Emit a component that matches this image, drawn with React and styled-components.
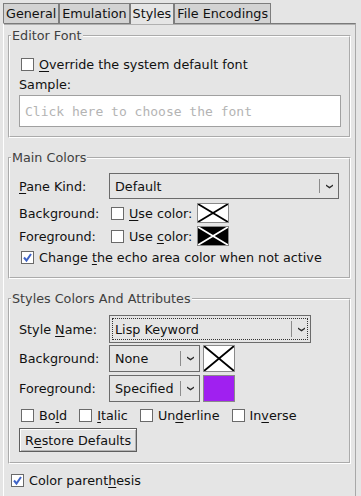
import React from 'react';
import styled, { createGlobalStyle } from 'styled-components';

const GlobalStyle = createGlobalStyle`
  html, body {
    margin: 0;
    background: #e5e5e5;
  }
  body {
    font-family: "DejaVu Sans", "Liberation Sans", sans-serif;
    font-size: 12.75px;
    color: #111;
  }
  u {
    text-underline-offset: 2px;
  }
`;

const Window = styled.div`
  width: 361px;
  height: 496px;
  box-sizing: border-box;
  padding: 3px 5px 0 3px;
  display: flex;
  flex-direction: column;
  overflow: hidden;
`;

const TabBar = styled.div`
  display: flex;
  height: 20px;
  position: relative;
  z-index: 1;
`;

const Tab = styled.div`
  box-sizing: border-box;
  height: ${p => (p.$active ? 21 : 20)}px;
  padding: 0 2px;
  line-height: 19px;
  border: 1px solid #7d7d7d;
  border-bottom: none;
  background: ${p => (p.$active ? '#e5e5e5' : '#d3d3d3')};
  white-space: nowrap;
`;

const Panel = styled.div`
  flex: 1;
  border-top: 1px solid #7a7a7a;
  border-left: 1px solid #fff;
  border-right: 1px solid #a8a8a8;
  box-shadow: inset 0 1px 0 #b0b0b0;
  padding: 4px 4px 0 4px;
`;

const Group = styled.fieldset`
  margin: 0 0 ${p => p.$mb ?? 12}px;
  padding: 0;
  border: 2px groove #fff;
  min-width: 0;
`;

const GroupTitle = styled.legend`
  margin-left: 1px;
  padding: 0 1px;
  line-height: 15px;
  color: #404040;
`;

const GroupBody = styled.div`
  display: flex;
  flex-direction: column;
  padding: ${p => p.$top}px 8px ${p => p.$bottom}px 9px;
`;

const CheckRow = styled.label`
  display: flex;
  align-items: center;
  height: 17px;
  gap: 5px;
  margin: ${p => p.$mt || 0}px 0 0 ${p => p.$ml || 0}px;
  white-space: nowrap;
`;

const Box = styled.span`
  flex: none;
  box-sizing: border-box;
  width: 13px;
  height: 13px;
  border: 1px solid #6a6a6a;
  background: #fff;
  display: flex;
  align-items: center;
  justify-content: center;
`;

const Caption = styled.span`
  line-height: 15px;
  white-space: nowrap;
`;

const FieldLabel = styled.div`
  line-height: 15px;
  margin-top: ${p => p.$mt || 0}px;
`;

const FontSample = styled.div`
  margin-top: 3px;
  height: 32px;
  box-sizing: border-box;
  border: 1px solid #a0a0a0;
  background: #fff;
  padding: 0 5px;
  display: flex;
  align-items: center;
  font-family: "DejaVu Sans Mono", "Liberation Mono", monospace;
  font-size: 13px;
  color: #b4b4b4;
`;

const FormRow = styled.div`
  display: grid;
  grid-template-columns: 90px auto;
  align-items: center;
  height: ${p => p.$h}px;
  margin-top: ${p => p.$mt || 0}px;
`;

const RowControls = styled.div`
  display: flex;
  align-items: center;
  gap: ${p => p.$gap ?? 3}px;
`;

const Combo = styled.div`
  box-sizing: border-box;
  width: ${p => p.$w}px;
  height: ${p => p.$h}px;
  border: 1px solid #6b6b6b;
  background: #e5e5e5;
  display: flex;
  outline: ${p => (p.$focus ? '1px dotted #333' : 'none')};
  outline-offset: -4px;
`;

const ComboText = styled.div`
  flex: 1;
  display: flex;
  align-items: center;
  padding-left: 5px;
  white-space: nowrap;
`;

const ComboArrow = styled.div`
  width: 18px;
  display: flex;
  align-items: center;
  justify-content: center;
  border-left: 1px solid #8c8c8c;
  margin: 5px 0;
`;

const Swatch = styled.div`
  box-sizing: border-box;
  width: 32px;
  height: ${p => p.$h}px;
  border: 1px solid #8a8a8a;
  background: ${p => p.$bg};
  display: flex;
`;

const SwatchGap = styled.span`
  width: 5px;
`;

const AttrRow = styled.div`
  display: flex;
  align-items: center;
  gap: 12px;
  margin: 5px 0 0 2px;
`;

const Button = styled.div`
  align-self: flex-start;
  box-sizing: border-box;
  height: 24px;
  margin-top: 4px;
  padding: 0 5px;
  display: flex;
  align-items: center;
  border: 1px solid #5e5e5e;
  box-shadow: inset 1px 1px 0 #fff, inset -1px -1px 0 #b4b4b4;
  background: #e5e5e5;
  white-space: nowrap;
`;

const Check = ({ checked, children, mt, ml }) => (
  <CheckRow $mt={mt} $ml={ml}>
    <Box>
      {checked && (
        <svg width="11" height="11" viewBox="0 0 11 11">
          <path d="M2 5.5 L4.5 8.5 L9 2" fill="none" stroke="#3f63c6" strokeWidth="2" />
        </svg>
      )}
    </Box>
    <Caption>{children}</Caption>
  </CheckRow>
);

const Arrow = () => (
  <svg width="7" height="5" viewBox="0 0 7 5">
    <path d="M0 0.5 L3.5 2.8 L7 0.5 L7 2 L3.5 4.6 L0 2 Z" fill="#2a2a2a" />
  </svg>
);

const ComboBox = ({ value, w, h, focus }) => (
  <Combo $w={w} $h={h} $focus={focus}>
    <ComboText>{value}</ComboText>
    <ComboArrow>
      <Arrow />
    </ComboArrow>
  </Combo>
);

const ColorSwatch = ({ bg, line, h }) => (
  <Swatch $bg={bg} $h={h}>
    {line && (
      <svg width="30" height={h - 2} viewBox={`0 0 30 ${h - 2}`} preserveAspectRatio="none">
        <path d={`M0 0 L30 ${h - 2} M30 0 L0 ${h - 2}`} stroke={line} strokeWidth="1.8" />
      </svg>
    )}
  </Swatch>
);

const tabs = ['General', 'Emulation', 'Styles', 'File Encodings'];

export default function App() {
  return (
    <Window>
      <GlobalStyle />
      <TabBar>
        {tabs.map(t => (
          <Tab key={t} $active={t === 'Styles'}>{t}</Tab>
        ))}
      </TabBar>
      <Panel>
        <Group>
          <GroupTitle>Editor Font</GroupTitle>
          <GroupBody $top={13} $bottom={9}>
            <Check ml={2}><u>O</u>verride the system default font</Check>
            <FieldLabel $mt={4}>Sample:</FieldLabel>
            <FontSample>Click here to choose the font</FontSample>
          </GroupBody>
        </Group>

        <Group>
          <GroupTitle>Main Colors</GroupTitle>
          <GroupBody $top={8} $bottom={11}>
            <FormRow $h={26}>
              <span><u>P</u>ane Kind:</span>
              <ComboBox value="Default" w={230} h={26} />
            </FormRow>
            <FormRow $h={20} $mt={4}>
              <span>Background:</span>
              <RowControls $gap={0}>
                <Check ml={2}><u>U</u>se color:</Check>
                <SwatchGap />
                <ColorSwatch bg="#fff" line="#000" h={20} />
              </RowControls>
            </FormRow>
            <FormRow $h={20} $mt={3}>
              <span>Foreground:</span>
              <RowControls $gap={0}>
                <Check ml={2}>Use <u>c</u>olor:</Check>
                <SwatchGap />
                <ColorSwatch bg="#000" line="#fff" h={20} />
              </RowControls>
            </FormRow>
            <Check checked mt={3} ml={2}>Change <u>t</u>he echo area color when not active</Check>
          </GroupBody>
        </Group>

        <Group $mb={8}>
          <GroupTitle>Styles Colors And Attributes</GroupTitle>
          <GroupBody $top={9} $bottom={10}>
            <FormRow $h={27}>
              <span>Style <u>N</u>ame:</span>
              <ComboBox value="Lisp Keyword" w={202} h={28} focus />
            </FormRow>
            <FormRow $h={27} $mt={3}>
              <span>Background:</span>
              <RowControls>
                <ComboBox value="None" w={91} h={27} />
                <ColorSwatch bg="#fff" line="#000" h={27} />
              </RowControls>
            </FormRow>
            <FormRow $h={27} $mt={3}>
              <span>Foreground:</span>
              <RowControls>
                <ComboBox value="Specified" w={91} h={27} />
                <ColorSwatch bg="#a020f0" h={27} />
              </RowControls>
            </FormRow>
            <AttrRow>
              <Check>Bo<u>l</u>d</Check>
              <Check><u>I</u>talic</Check>
              <Check>Un<u>d</u>erline</Check>
              <Check>In<u>v</u>erse</Check>
            </AttrRow>
            <Button>R<u>e</u>store Defaults</Button>
          </GroupBody>
        </Group>

        <Check checked ml={3}>Color parent<u>h</u>esis</Check>
      </Panel>
    </Window>
  );
}
